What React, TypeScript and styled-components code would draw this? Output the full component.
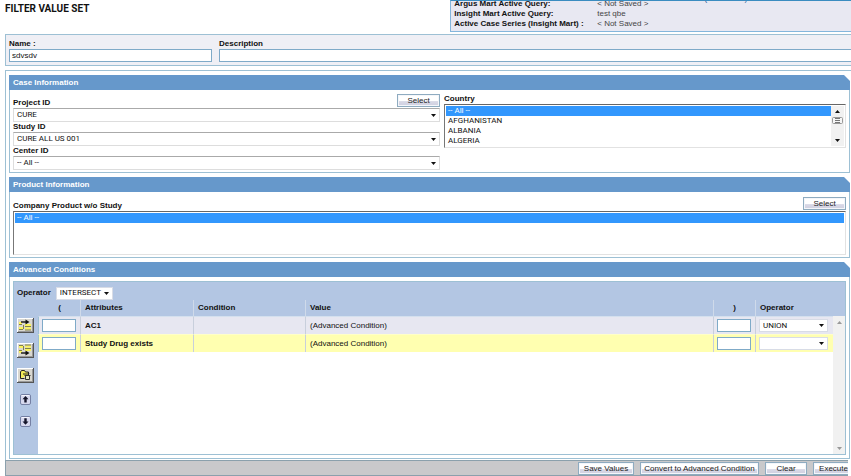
import React, { useState } from "react";
import styled, { createGlobalStyle, css } from "styled-components";

const GlobalStyle = createGlobalStyle`
  * { box-sizing: border-box; }
  body {
    margin: 0;
    background: #fff;
    color: #111;
    font-family: "Liberation Sans", Arial, sans-serif;
    font-size: 8px;
    line-height: 10px;
    overflow: hidden;
  }
  button, input, select { font: inherit; color: inherit; margin: 0; }
  select { font-family: Roboto, sans-serif; }
`;

const line = "#9dc0d4";

const Page = styled.div`
  display: flex;
  flex-direction: column;
  padding-left: 5px;
`;

const TopBar = styled.header`
  display: grid;
  grid-template-columns: 10fr 9fr;
  height: 32px;
  margin-bottom: 2px;
`;

const Title = styled.h1`
  margin: 3px 0 0;
  font-family: Roboto, sans-serif;
  font-size: 10px;
  line-height: 12px;
  font-weight: 700;
`;

const StatusPanel = styled.section`
  display: flex;
  align-items: flex-end;
  gap: 56px;
  padding: 0 3px 2px;
  overflow: hidden;
  background: #e8e8f2;
  border: 1px solid #84b6dc;
  border-top-color: #3a8cc0;
  border-right: 0;
`;

const StatusLink = styled.a`
  align-self: flex-start;
  margin-top: -7px;
  color: #1f5f99;
  text-decoration: none;
`;

const StatusList = styled.dl`
  display: grid;
  grid-template-columns: 132px auto;
  column-gap: 11px;
  margin: 0;
  white-space: nowrap;
  dt { font-weight: bold; }
  dd { margin: 0; color: #444; }
`;

const Bold = styled.label`
  display: block;
  font-weight: bold;
  white-space: nowrap;
`;

const NamePanel = styled.section`
  display: grid;
  grid-template-columns: 203px 1fr;
  column-gap: 7px;
  height: 32px;
  padding: 4px 0 0 3px;
  margin-bottom: 4px;
  background: #efeff5;
  border: 1px solid ${line};
  border-right: 0;
`;

const TextInput = styled.input<{ $open?: boolean }>`
  display: block;
  width: 100%;
  height: 13px;
  padding: 0 2px;
  background: #fff;
  border: 1px solid #7faac8;
  border-radius: 0;
  outline: 0;
  ${(p) => p.$open && css`border-right: 0;`}
`;

const Main = styled.main`
  display: flex;
  flex-direction: column;
  gap: 4px;
  padding: 4px 1px 1px 3px;
  border-top: 1px solid ${line};
  border-left: 1px solid ${line};
`;

const Section = styled.section`
  display: flex;
  flex-direction: column;
`;

const SectionTitle = styled.h2`
  margin: 0;
  height: 15px;
  padding: 0 4px;
  color: #fff;
  background: #6698cb;
  font-size: 8px;
  line-height: 15px;
  clip-path: polygon(0 0, calc(100% - 6px) 0, 100% 6px, 100% 100%, 0 100%);
`;

const SectionBody = styled.div<{ $top?: number; $bottom?: number }>`
  padding: ${(p) => p.$top ?? 4}px 3px ${(p) => p.$bottom ?? 2}px;
  border: 1px solid ${line};
  border-top: 0;
`;

const CaseGrid = styled.div`
  display: grid;
  grid-template-columns: 17fr 16fr;
  column-gap: 4px;
`;

const Stack = styled.div`
  display: flex;
  flex-direction: column;
`;

const LabelRow = styled.div`
  display: flex;
  justify-content: space-between;
  align-items: flex-end;
  height: 14px;
`;

const Button = styled.button<{ $width: number }>`
  flex: none;
  width: ${(p) => p.$width}px;
  height: 13px;
  padding: 0;
  line-height: 10px;
  white-space: nowrap;
  color: #222;
  background: linear-gradient(#fff 0 50%, #d8d8e6 60%, #d0d0e0);
  border: 1px solid #8eabc0;
  box-shadow: inset 0 0 0 1px #f4f6fa;
  border-radius: 0;
`;

const SelectTop = styled(Button)`
  align-self: flex-start;
`;

const SelectCell = styled.div<{ $plain?: boolean }>`
  display: grid;
  align-items: center;
  height: ${(p) => (p.$plain ? 13 : 14)}px;
  background: #fff;
  border: 1px solid #ddd;
  border-top-color: #aaa;
  ${(p) => p.$plain && css`border-color: #d8dce6;`}
  > * { grid-area: 1 / 1; }
  > svg { justify-self: end; margin-right: 3px; pointer-events: none; }
  select {
    appearance: none;
    width: 100%;
    height: 11px;
    padding: 0 3px;
    line-height: 10px;
    border: 0;
    outline: 0;
    background: transparent;
  }
`;

const ListFrame = styled.div`
  display: flex;
  height: 44px;
  padding: 1px;
  background: #fff;
  border: 1px solid #e2e2e2;
  border-top-color: #666;
  border-left-color: #777;
  select {
    flex: 1;
    min-width: 0;
    height: 40px;
    padding: 0;
    border: 0;
    outline: 0;
    border-radius: 0;
    background: #fff;
    overflow: hidden;
    scrollbar-width: none;
  }
  option {
    height: 10px;
    min-height: 10px;
    padding: 0 2px;
    line-height: 10px;
  }
  option:checked {
    color: #fff;
    -webkit-text-fill-color: #fff;
    background: #3297fd linear-gradient(#3297fd, #3297fd);
  }
`;

const ListScroll = styled.div`
  display: flex;
  flex-direction: column;
  align-items: center;
  gap: 4px;
  width: 13px;
  padding: 4px 0;
  background: #f1f1f1;
  svg:last-child { margin-top: auto; }
`;

const Conditions = styled.div`
  display: flex;
  flex-direction: column;
  background: #b3c6e3;
  border: 1px solid ${line};
`;

const OperatorRow = styled.div`
  display: flex;
  align-items: center;
  gap: 5px;
  height: 18px;
  padding: 4px 3px 0;
  ${SelectCell} { width: 57px; }
`;

const Workspace = styled.div`
  display: grid;
  grid-template-columns: 24px 1fr 12px;
  height: 154px;
`;

const Toolbar = styled.div`
  display: flex;
  flex-direction: column;
  align-items: center;
  gap: 10px;
  padding: 18px 2px 0 0;
`;

const IconButton = styled.button<{ $round?: boolean }>`
  display: block;
  padding: 0;
  border: 0;
  background: none;
  line-height: 0;
  margin-top: ${(p) => (p.$round ? 1 : 0)}px;
`;

const TableArea = styled.div`
  background: #fff;
`;

const Table = styled.table`
  width: 100%;
  table-layout: fixed;
  border-collapse: separate;
  border-spacing: 0;
  th, td {
    padding: 0 4px;
    text-align: left;
    white-space: nowrap;
    border-left: 1px solid #c8cfdc;
  }
  th { height: 16px; background: #b3c6e3; border-left-color: #cfdaea; }
  th:first-child, td:first-child { border-left-color: ${line}; }
  th:first-child { border-left-color: #b3c6e3; }
  td:nth-child(1), td:nth-child(5) { padding: 0 4px 0 3px; }
  th:nth-child(1), th:nth-child(5) { text-align: center; }
  td:nth-child(2) { font-weight: bold; }
  td:nth-child(6) { padding: 0 5px 0 3px; }
`;

const Row = styled.tr<{ $active?: boolean }>`
  td {
    height: 18px;
    background: ${(p) => (p.$active ? "#ffffb0" : "#e7e7f1")};
    border-top: 1px solid ${(p) => (p.$active ? "#ffffc8" : "#d4e0ee")};
  }
`;

const GridScroll = styled.div`
  display: flex;
  flex-direction: column;
  align-items: center;
  margin-top: 16px;
  padding: 5px 0 4px;
  background: #f1f1f1;
  svg:last-child { margin-top: auto; }
`;

const Footer = styled.footer`
  display: flex;
  justify-content: flex-end;
  gap: 6px;
  height: 16px;
  margin-right: 3px;
  padding-top: 1px;
  overflow: hidden;
  background: #c9c9cb;
  border: 1px solid #8ba0ac;
  border-right: 0;
  button:last-child { margin-right: -6px; }
`;

const Arrow = ({ up = false, color = "#111", size = 5 }) => (
  <svg width={size} height="3" viewBox="0 0 6 3" preserveAspectRatio="none" aria-hidden="true">
    <path d={up ? "M0 3L3 0L6 3Z" : "M0 0L3 3L6 0Z"} fill={color} />
  </svg>
);

const Thumb = () => (
  <svg width="11" height="7" viewBox="0 0 11 7" aria-hidden="true">
    <rect x=".5" y=".5" width="10" height="6" rx="1" fill="#f6f6f6" stroke="#999" />
    <path d="M3 1.500h5M3 3.500h5M3 5.500h5" stroke="#555" strokeWidth=".8" />
  </svg>
);

const Plate = () => (
  <>
    <path d="M0 0h17v15H0z" fill="#555" />
    <path d="M0 0h16v14H0z" fill="#fff" />
    <path d="M1 1h15v13H1z" fill="#999" />
    <path d="M1 1h14v12H1z" fill="#d9d7d0" />
  </>
);

const InsertIcon = ({ below = false }) => (
  <svg width="17" height="15" viewBox="0 0 17 15" aria-hidden="true">
    <Plate />
    <g transform={below ? "translate(0 14) scale(1 -1)" : undefined}>
      <path d="M2 4h3v2H2zM8 6h6v2H8zM2 9h4v2H2zM8 9.500h6v2H8z" fill="#fbf35c" />
      <path d="M2 6.500h3M2 11.500h4M8 8.500h6M8 12h6M6.500 7v4" stroke="#77773c" strokeWidth=".9" />
      <path d="M4 4h5" stroke="#222" strokeWidth="1.500" />
      <path d="M8.500 1.500l4 2.500-4 2.500z" fill="#111" />
    </g>
  </svg>
);

const FolderIcon = () => (
  <svg width="17" height="15" viewBox="0 0 17 15" aria-hidden="true">
    <Plate />
    <path d="M3.5 10.500V4l1-1.500h3l1 1.500h3v3M3.500 10.500h4" fill="#f3ec58" stroke="#222" />
    <path d="M6 6h6l-1-2" fill="none" stroke="#222" />
    <path d="M8.500 7.500h4v4h-4z" fill="#e4e4bc" stroke="#333" />
    <path d="M7.500 7.500h6" stroke="#333" />
  </svg>
);

const MoveIcon = ({ down = false }) => (
  <svg width="11" height="11" viewBox="0 0 11 11" aria-hidden="true">
    <rect x=".5" y=".5" width="10" height="10" rx="1.500" fill="#d6d8ee" stroke="#7580a4" />
    <path d="M1.500 1.500h8" stroke="#f5f5ff" />
    <path d="M5.500 2L8.500 5.200H6.700V8.500H4.300V5.200H2.500Z" fill="#15152a" transform={down ? "rotate(180 5.500 5.400)" : undefined} />
  </svg>
);

function DropDown({ id, label, options, plain }: { id?: string; label?: string; options: string[]; plain?: boolean }) {
  return (
    <SelectCell $plain={plain}>
      <select id={id} aria-label={label}>
        {options.map((o) => <option key={o}>{o}</option>)}
      </select>
      <Arrow />
    </SelectCell>
  );
}

const rows = [
  { attribute: "AC1", value: "(Advanced Condition)", operator: "UNION" },
  { attribute: "Study Drug exists", value: "(Advanced Condition)", operator: "" },
];

export default function App() {
  const [name, setName] = useState("sdvsdv");
  return (
    <Page>
      <GlobalStyle />
      <TopBar>
        <Title>FILTER VALUE SET</Title>
        <StatusPanel>
          <StatusList>
            <dt>Argus Mart Active Query:</dt><dd>&lt; Not Saved &gt;</dd>
            <dt>Insight Mart Active Query:</dt><dd>test qbe</dd>
            <dt>Active Case Series (Insight Mart) :</dt><dd>&lt; Not Saved &gt;</dd>
          </StatusList>
          <StatusLink href="#">(Not Saved)</StatusLink>
        </StatusPanel>
      </TopBar>

      <NamePanel>
        <div>
          <Bold htmlFor="name">Name :</Bold>
          <TextInput id="name" value={name} onChange={(e) => setName(e.target.value)} />
        </div>
        <div>
          <Bold htmlFor="description">Description</Bold>
          <TextInput id="description" $open />
        </div>
      </NamePanel>

      <Main>
        <Section>
          <SectionTitle>Case Information</SectionTitle>
          <SectionBody>
            <CaseGrid>
              <Stack>
                <LabelRow>
                  <Bold htmlFor="project">Project ID</Bold>
                  <SelectTop type="button" $width={43}>Select</SelectTop>
                </LabelRow>
                <DropDown id="project" options={["CURE"]} />
                <Bold htmlFor="study">Study ID</Bold>
                <DropDown id="study" options={["CURE ALL US 001"]} />
                <Bold htmlFor="center">Center ID</Bold>
                <DropDown id="center" options={["-- All --"]} />
              </Stack>
              <Stack>
                <Bold htmlFor="country">Country</Bold>
                <ListFrame>
                  <select id="country" multiple size={4} defaultValue={["-- All --"]}>
                    <option>-- All --</option>
                    <option>AFGHANISTAN</option>
                    <option>ALBANIA</option>
                    <option>ALGERIA</option>
                  </select>
                  <ListScroll><Arrow up /><Thumb /><Arrow /></ListScroll>
                </ListFrame>
              </Stack>
            </CaseGrid>
          </SectionBody>
        </Section>

        <Section>
          <SectionTitle>Product Information</SectionTitle>
          <SectionBody $top={5}>
            <LabelRow>
              <Bold htmlFor="product">Company Product w/o Study</Bold>
              <SelectTop type="button" $width={43}>Select</SelectTop>
            </LabelRow>
            <ListFrame>
              <select id="product" multiple size={4} defaultValue={["-- All --"]}>
                <option>-- All --</option>
              </select>
            </ListFrame>
          </SectionBody>
        </Section>

        <Section>
          <SectionTitle>Advanced Conditions</SectionTitle>
          <SectionBody $bottom={3}>
            <Conditions>
              <OperatorRow>
                <Bold htmlFor="operator">Operator</Bold>
                <DropDown id="operator" options={["INTERSECT"]} plain />
              </OperatorRow>
              <Workspace>
                <Toolbar>
                  <IconButton type="button" aria-label="Insert above"><InsertIcon /></IconButton>
                  <IconButton type="button" aria-label="Insert below"><InsertIcon below /></IconButton>
                  <IconButton type="button" aria-label="Delete"><FolderIcon /></IconButton>
                  <IconButton type="button" aria-label="Move up" $round><MoveIcon /></IconButton>
                  <IconButton type="button" aria-label="Move down" $round><MoveIcon down /></IconButton>
                </Toolbar>
                <TableArea>
                  <Table>
                    <colgroup>
                      <col width="42" /><col width="113" /><col width="112" /><col /><col width="42" /><col width="78" />
                    </colgroup>
                    <thead>
                      <tr>
                        <th>(</th><th>Attributes</th><th>Condition</th><th>Value</th><th>)</th><th>Operator</th>
                      </tr>
                    </thead>
                    <tbody>
                      {rows.map((r, i) => (
                        <Row key={r.attribute} $active={i === 1}>
                          <td><TextInput aria-label="Opening parenthesis" /></td>
                          <td>{r.attribute}</td>
                          <td />
                          <td>{r.value}</td>
                          <td><TextInput aria-label="Closing parenthesis" /></td>
                          <td><DropDown label="Row operator" options={[r.operator]} plain /></td>
                        </Row>
                      ))}
                    </tbody>
                  </Table>
                </TableArea>
                <GridScroll><Arrow up color="#999" /><Arrow color="#999" /></GridScroll>
              </Workspace>
            </Conditions>
          </SectionBody>
        </Section>
      </Main>

      <Footer>
        <Button type="button" $width={56}>Save Values</Button>
        <Button type="button" $width={119}>Convert to Advanced Condition</Button>
        <Button type="button" $width={42}>Clear</Button>
        <Button type="button" $width={41}>Execute</Button>
      </Footer>
    </Page>
  );
}
